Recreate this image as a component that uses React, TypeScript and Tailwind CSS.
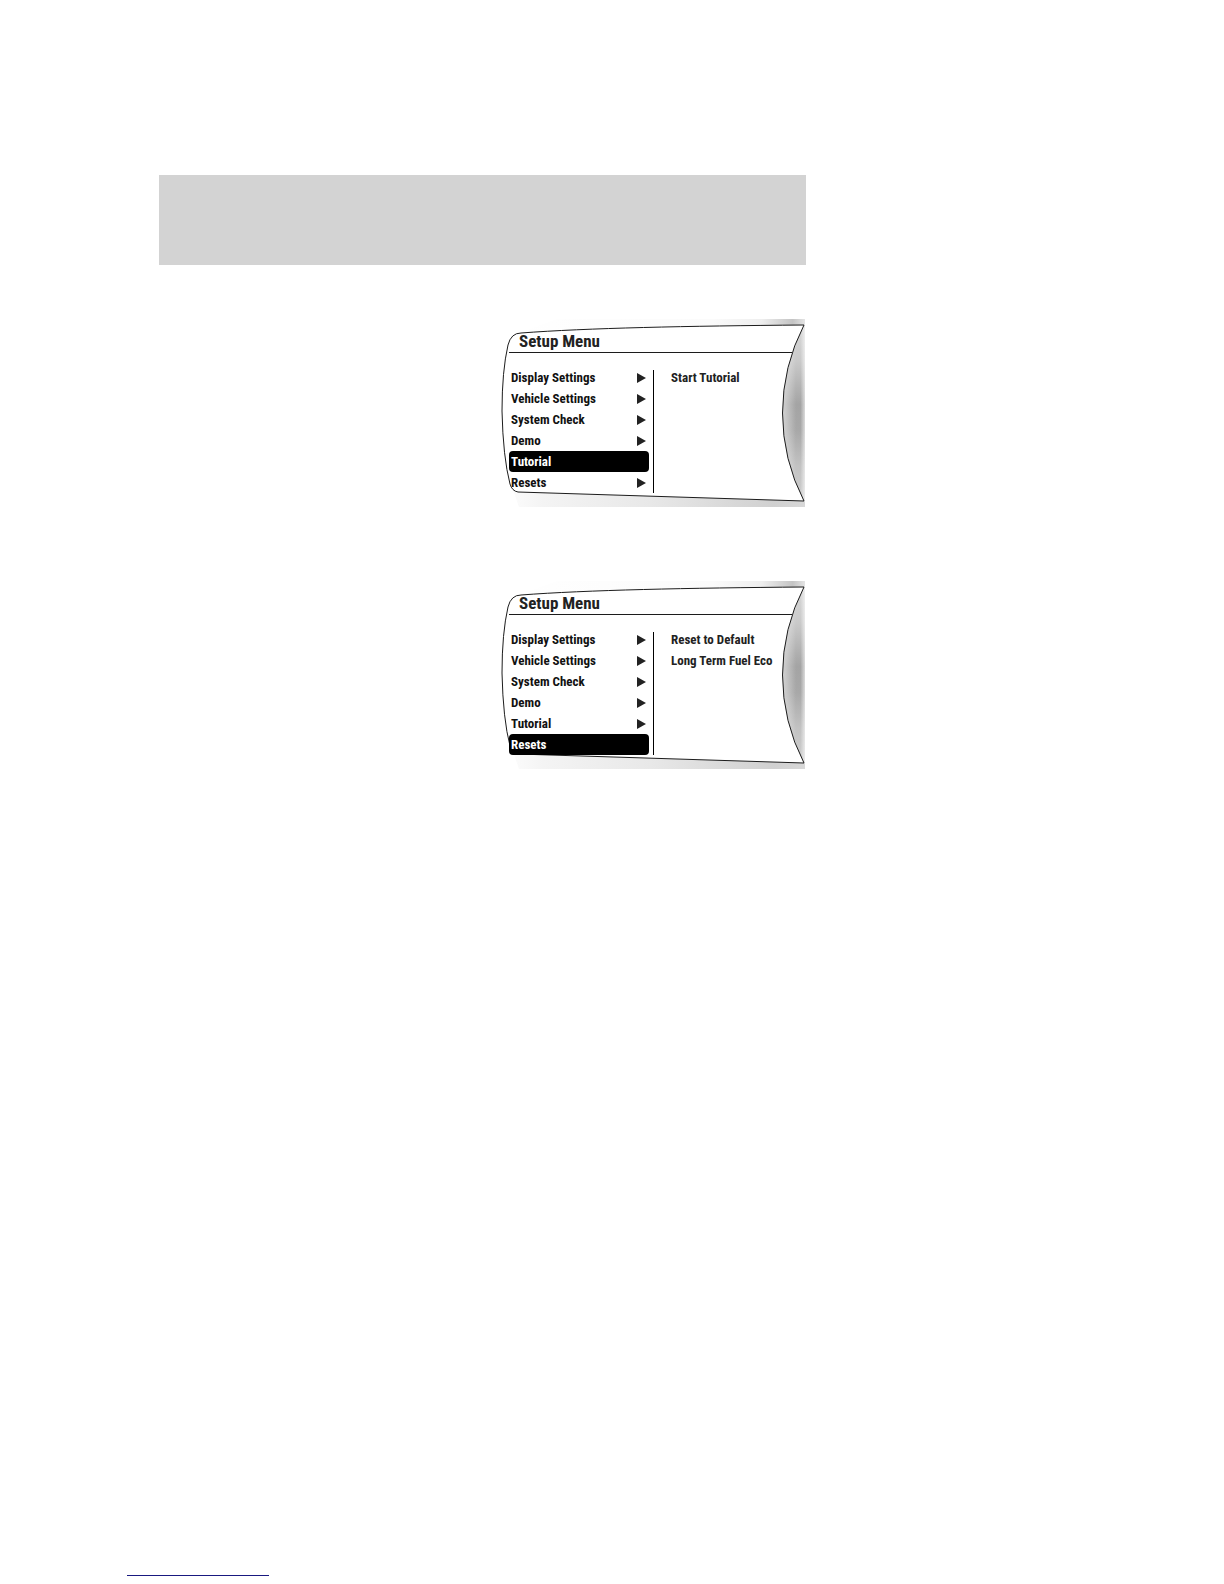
import React from "react";

type Screen = {
  selected: string;
  options: string[];
};

const MENU_ITEMS = ["Display Settings", "Vehicle Settings", "System Check", "Demo", "Tutorial", "Resets"];

const SCREENS: Screen[] = [
  { selected: "Tutorial", options: ["Start Tutorial"] },
  { selected: "Resets", options: ["Reset to Default", "Long Term Fuel Eco"] },
];

function Bezel({ id }: { id: string }): React.ReactElement {
  return (
    <svg viewBox="0 0 309 188" className="absolute inset-0 h-full w-full" aria-hidden="true">
      <defs>
        <linearGradient id={`${id}-edge`} x1="0" x2="1" y1="0" y2="0">
          <stop offset="0" stopColor="#fff" />
          <stop offset="0.15" stopColor="#f4f4f4" />
          <stop offset="0.5" stopColor="#e8e8e8" />
          <stop offset="0.9" stopColor="#d0d0d0" />
          <stop offset="1" stopColor="#d8d8d8" />
        </linearGradient>
        <linearGradient id={`${id}-top`} x1="0" x2="1" y1="0" y2="0">
          <stop offset="0" stopColor="#fff" />
          <stop offset="0.7" stopColor="#fbfbfb" />
          <stop offset="0.86" stopColor="#eeeeee" />
          <stop offset="0.96" stopColor="#c4c4c4" />
          <stop offset="1" stopColor="#e4e4e4" />
        </linearGradient>
        <linearGradient id={`${id}-lens`} x1="0" x2="0" y1="0" y2="1">
          <stop offset="0" stopColor="#d8d8d8" />
          <stop offset="0.2" stopColor="#cacaca" />
          <stop offset="0.45" stopColor="#a4a4a4" />
          <stop offset="0.6" stopColor="#a8a8a8" />
          <stop offset="0.8" stopColor="#c2c2c2" />
          <stop offset="1" stopColor="#cfcfcf" />
        </linearGradient>
        <linearGradient id={`${id}-shine`} x1="0" x2="1" y1="0" y2="0">
          <stop offset="0" stopColor="#fff" stopOpacity="0.5" />
          <stop offset="0.6" stopColor="#fff" stopOpacity="0" />
          <stop offset="0.8" stopColor="#fff" stopOpacity="0" />
          <stop offset="1" stopColor="#fff" stopOpacity="0.6" />
        </linearGradient>
      </defs>
      <path d="M0 0H308V94H0Z" fill={`url(#${id}-top)`} />
      <path d="M0 94H308V188H0Z" fill={`url(#${id}-edge)`} />
      <path d="M307 6A191 191 0 0 0 307 182H308V6Z" fill={`url(#${id}-lens)`} />
      <path d="M307 6A191 191 0 0 0 307 182H308V6Z" fill={`url(#${id}-shine)`} />
      <path d="M0 0H60L22 14Q14 14 12 26Q5 52 5 92Q6 138 14 165L22 188H0Z" fill="#fff" />
      <path
        d="M307 6C190 7 90 9 24 14Q14 14 11 26Q5 52 5 92Q6 138 13 165Q15 172 21 173L307 182A191 191 0 0 1 307 6Z"
        fill="#fff"
        stroke="#1c1c1c"
      />
    </svg>
  );
}

function SetupScreen({ selected, options }: Screen): React.ReactElement {
  return (
    <section className="relative ml-auto h-[188px] w-[309px]">
      <Bezel id={selected} />
      <div className="relative pt-3 pl-3">
        <h2 className="mr-[14px] h-[22px] border-b border-[#1c1c1c] pl-[10px] text-[17px] leading-5 font-bold text-[#222]">
          Setup Menu
        </h2>
        <div className="flex pt-[14px]">
          <ul className="w-[140px] shrink-0">
            {MENU_ITEMS.map((item) => (
              <li key={item}>
                <button
                  className={
                    item === selected
                      ? "flex h-[21px] w-full items-center rounded-sm bg-black pl-[2px] text-white"
                      : "flex h-[21px] w-full items-center justify-between pr-[3px] pl-[2px] text-[#111]"
                  }
                >
                  <span>{item}</span>
                  {item !== selected && (
                    <svg viewBox="0 0 9 10" className="h-[10px] w-[9px]" aria-hidden="true">
                      <path d="M0 0L9 5L0 10Z" fill="#222" />
                    </svg>
                  )}
                </button>
              </li>
            ))}
          </ul>
          <div className="mt-[3px] ml-1 w-px bg-black" />
          <ul className="pl-[17px] whitespace-nowrap text-[#222]">
            {options.map((option) => (
              <li key={option}>
                <button className="flex h-[21px] items-center">{option}</button>
              </li>
            ))}
          </ul>
        </div>
      </div>
    </section>
  );
}

export default function App(): React.ReactElement {
  return (
    <div className="flex min-h-screen flex-col bg-white px-[127px] pt-[175px] pb-2">
      <main className="ml-8 w-full max-w-[647px] font-['Liberation_Sans_Narrow','Roboto_Condensed','Open_Sans_Condensed',sans-serif] text-[13px] font-bold">
        <header className="h-[90px] bg-[#d3d3d3]" />
        <div className="flex flex-col gap-[74px] pt-[54px]">
          {SCREENS.map((screen) => (
            <SetupScreen key={screen.selected} {...screen} />
          ))}
        </div>
      </main>
      <hr className="mt-auto w-[142px] border-[#191980]" />
    </div>
  );
}
